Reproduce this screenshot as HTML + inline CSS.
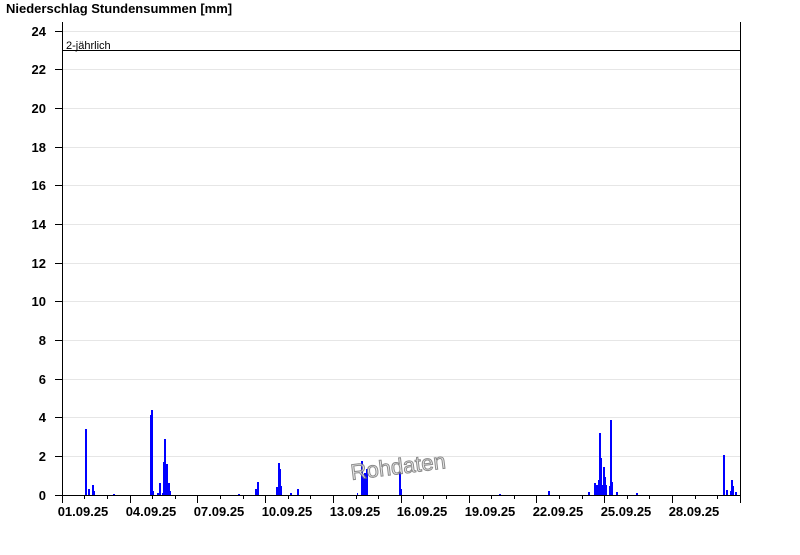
<!DOCTYPE html>
<html><head><meta charset="utf-8"><style>
body{margin:0;background:#fff;width:800px;height:550px;overflow:hidden}
svg text{font-family:"Liberation Sans",Arial,sans-serif}
</style></head><body>
<svg width="800" height="550" xmlns="http://www.w3.org/2000/svg">
<text x="6" y="13" font-size="13" font-weight="bold" fill="#000">Niederschlag Stundensummen [mm]</text>
<g stroke="#e6e6e6" stroke-width="1">
<line x1="62" y1="31.5" x2="740" y2="31.5"/><line x1="62" y1="69.5" x2="740" y2="69.5"/>
<line x1="62" y1="108.5" x2="740" y2="108.5"/><line x1="62" y1="147.5" x2="740" y2="147.5"/>
<line x1="62" y1="185.5" x2="740" y2="185.5"/><line x1="62" y1="224.5" x2="740" y2="224.5"/>
<line x1="62" y1="263.5" x2="740" y2="263.5"/><line x1="62" y1="301.5" x2="740" y2="301.5"/>
<line x1="62" y1="340.5" x2="740" y2="340.5"/><line x1="62" y1="379.5" x2="740" y2="379.5"/>
<line x1="62" y1="417.5" x2="740" y2="417.5"/><line x1="62" y1="456.5" x2="740" y2="456.5"/>
</g>
<g font-size="13" font-weight="bold" text-anchor="end" fill="#000">
<text x="46" y="36">24</text><text x="46" y="74">22</text><text x="46" y="113">20</text>
<text x="46" y="152">18</text><text x="46" y="190">16</text><text x="46" y="229">14</text>
<text x="46" y="268">12</text><text x="46" y="306">10</text><text x="46" y="345">8</text>
<text x="46" y="384">6</text><text x="46" y="422">4</text><text x="46" y="461">2</text><text x="46" y="500">0</text>
</g>
<g stroke="#000" stroke-width="1">
<line x1="55" y1="31.5" x2="62" y2="31.5"/><line x1="55" y1="69.5" x2="62" y2="69.5"/>
<line x1="55" y1="108.5" x2="62" y2="108.5"/><line x1="55" y1="147.5" x2="62" y2="147.5"/>
<line x1="55" y1="185.5" x2="62" y2="185.5"/><line x1="55" y1="224.5" x2="62" y2="224.5"/>
<line x1="55" y1="263.5" x2="62" y2="263.5"/><line x1="55" y1="301.5" x2="62" y2="301.5"/>
<line x1="55" y1="340.5" x2="62" y2="340.5"/><line x1="55" y1="379.5" x2="62" y2="379.5"/>
<line x1="55" y1="417.5" x2="62" y2="417.5"/><line x1="55" y1="456.5" x2="62" y2="456.5"/>
<line x1="55" y1="495.5" x2="62" y2="495.5"/>
</g>
<g fill="#0000ff">
<rect x="85" y="429" width="2" height="66"/><rect x="88" y="489" width="2" height="6"/>
<rect x="92" y="485" width="2" height="10"/><rect x="94" y="491" width="1" height="4"/>
<rect x="113" y="494" width="2" height="1"/>
<rect x="150" y="415" width="2" height="80"/><rect x="151" y="410" width="2" height="85"/>
<rect x="153" y="491" width="1" height="4"/><rect x="157" y="493" width="2" height="2"/>
<rect x="159" y="483" width="2" height="12"/><rect x="162" y="493" width="1" height="2"/>
<rect x="163" y="462" width="2" height="33"/><rect x="164" y="439" width="2" height="56"/>
<rect x="166" y="464" width="2" height="31"/><rect x="168" y="483" width="2" height="12"/>
<rect x="170" y="491" width="1" height="4"/>
<rect x="238" y="494" width="2" height="1"/>
<rect x="255" y="489" width="2" height="6"/><rect x="257" y="482" width="2" height="13"/>
<rect x="276" y="487" width="2" height="8"/><rect x="278" y="463" width="2" height="32"/>
<rect x="280" y="469" width="1" height="26"/><rect x="281" y="486" width="1" height="9"/>
<rect x="290" y="493" width="2" height="2"/><rect x="297" y="489" width="2" height="6"/>
<rect x="357" y="493" width="1" height="2"/>
<rect x="361" y="461" width="2" height="34"/><rect x="362" y="476" width="2" height="19"/>
<rect x="364" y="473" width="2" height="22"/><rect x="365" y="482" width="1" height="13"/>
<rect x="366" y="469" width="2" height="26"/><rect x="367" y="479" width="1" height="16"/>
<rect x="399" y="472" width="2" height="23"/><rect x="401" y="489" width="1" height="6"/>
<rect x="499" y="494" width="2" height="1"/><rect x="548" y="491" width="2" height="4"/>
<rect x="588" y="492" width="2" height="3"/>
<rect x="594" y="483" width="2" height="12"/><rect x="596" y="485" width="2" height="10"/>
<rect x="598" y="480" width="1" height="15"/><rect x="599" y="433" width="2" height="62"/>
<rect x="601" y="458" width="1" height="37"/><rect x="602" y="485" width="1" height="10"/>
<rect x="603" y="467" width="2" height="28"/><rect x="605" y="477" width="1" height="18"/>
<rect x="606" y="485" width="1" height="10"/>
<rect x="609" y="486" width="1" height="9"/><rect x="610" y="420" width="2" height="75"/>
<rect x="612" y="482" width="1" height="13"/><rect x="616" y="492" width="2" height="3"/>
<rect x="636" y="493" width="2" height="2"/>
<rect x="723" y="455" width="2" height="40"/><rect x="726" y="490" width="2" height="5"/>
<rect x="730" y="491" width="1" height="4"/><rect x="731" y="480" width="2" height="15"/>
<rect x="733" y="486" width="1" height="9"/><rect x="735" y="492" width="2" height="3"/>
</g>
<line x1="62" y1="50.5" x2="740" y2="50.5" stroke="#000"/>
<text x="66" y="49" font-size="11" fill="#000">2-jährlich</text>
<g stroke="#000" stroke-width="1">
<line x1="62.5" y1="22" x2="62.5" y2="496"/>
<line x1="740.5" y1="22" x2="740.5" y2="496"/>
<line x1="62" y1="495.5" x2="741" y2="495.5"/>
</g>
<g stroke="#000" stroke-width="1">
<line x1="62.5" y1="495" x2="62.5" y2="503"/><line x1="84.5" y1="495" x2="84.5" y2="499"/><line x1="107.5" y1="495" x2="107.5" y2="499"/>
<line x1="130.5" y1="495" x2="130.5" y2="503"/><line x1="152.5" y1="495" x2="152.5" y2="499"/><line x1="175.5" y1="495" x2="175.5" y2="499"/>
<line x1="197.5" y1="495" x2="197.5" y2="503"/><line x1="220.5" y1="495" x2="220.5" y2="499"/><line x1="243.5" y1="495" x2="243.5" y2="499"/>
<line x1="265.5" y1="495" x2="265.5" y2="503"/><line x1="288.5" y1="495" x2="288.5" y2="499"/><line x1="310.5" y1="495" x2="310.5" y2="499"/>
<line x1="333.5" y1="495" x2="333.5" y2="503"/><line x1="356.5" y1="495" x2="356.5" y2="499"/><line x1="378.5" y1="495" x2="378.5" y2="499"/>
<line x1="401.5" y1="495" x2="401.5" y2="503"/><line x1="423.5" y1="495" x2="423.5" y2="499"/><line x1="446.5" y1="495" x2="446.5" y2="499"/>
<line x1="469.5" y1="495" x2="469.5" y2="503"/><line x1="491.5" y1="495" x2="491.5" y2="499"/><line x1="514.5" y1="495" x2="514.5" y2="499"/>
<line x1="536.5" y1="495" x2="536.5" y2="503"/><line x1="559.5" y1="495" x2="559.5" y2="499"/><line x1="582.5" y1="495" x2="582.5" y2="499"/>
<line x1="604.5" y1="495" x2="604.5" y2="503"/><line x1="627.5" y1="495" x2="627.5" y2="499"/><line x1="649.5" y1="495" x2="649.5" y2="499"/>
<line x1="672.5" y1="495" x2="672.5" y2="503"/><line x1="695.5" y1="495" x2="695.5" y2="499"/><line x1="717.5" y1="495" x2="717.5" y2="499"/>
<line x1="740.5" y1="495" x2="740.5" y2="503"/>
</g>
<g font-size="13" font-weight="bold" fill="#000" text-anchor="middle">
<text x="83" y="516">01.09.25</text><text x="151" y="516">04.09.25</text><text x="219" y="516">07.09.25</text>
<text x="287" y="516">10.09.25</text><text x="355" y="516">13.09.25</text><text x="422" y="516">16.09.25</text>
<text x="490" y="516">19.09.25</text><text x="558" y="516">22.09.25</text><text x="626" y="516">25.09.25</text>
<text x="694" y="516">28.09.25</text>
</g>
<g transform="translate(399,474) rotate(-7)">
<text x="0" y="0" text-anchor="middle" font-size="22" fill="#e6e6e6" stroke="#777" stroke-width="1" opacity="0.85">Rohdaten</text>
</g>
</svg>
</body></html>
